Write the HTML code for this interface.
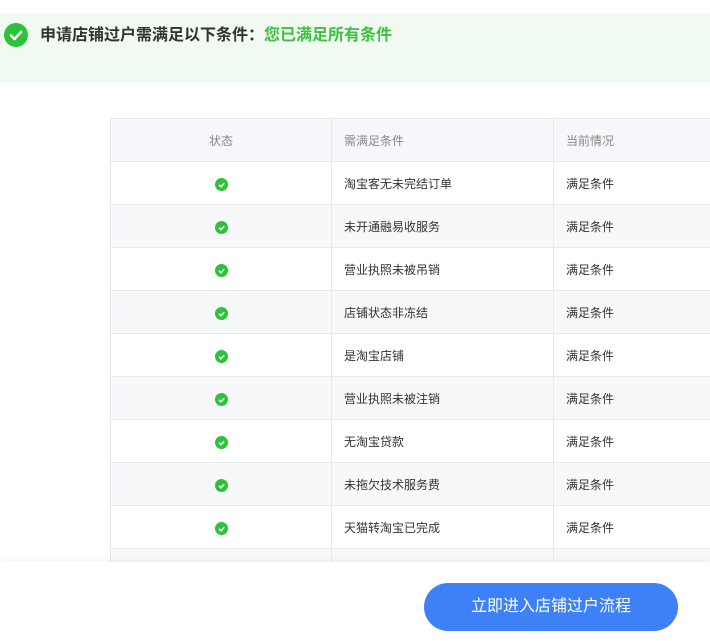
<!DOCTYPE html>
<html><head><meta charset="utf-8"><style>
*{margin:0;padding:0;box-sizing:border-box}
body{width:710px;height:641px;overflow:hidden;background:#fff;font-family:"Liberation Sans","Noto Sans CJK SC",sans-serif;position:relative}
.banner{position:absolute;left:0;top:13px;width:710px;height:70px;background:#f0faf0}
.banner .ic{position:absolute;left:4px;top:10px;width:24px;height:24px;border-radius:50%;background:#2ec13a}
.banner .t{position:absolute;left:40px;top:12px;font-size:16px;font-weight:bold;color:#333;line-height:22px}
.banner .t span{color:#3fc040}
table{position:absolute;left:110px;top:118px;border-collapse:collapse;width:620px;font-size:12px;color:#333}
td,th{height:43px;border:1px solid #e6eaef;font-weight:normal;text-align:left;padding-left:12px}
th{background:#f5f7fa;color:#888}
td:first-child,th:first-child{text-align:center;padding:0;width:221px}
td:nth-child(2),th:nth-child(2){width:222px}
tr:nth-child(odd) td{background:#f7f8fa}
.dot{display:inline-block;width:13px;height:13px;border-radius:50%;background:#2ec13a;vertical-align:middle;position:relative;top:1px}
.foot{position:absolute;left:0;top:562px;width:710px;height:79px;background:#fff;box-shadow:0 -3px 6px rgba(0,0,0,0.04)}
.btn{position:absolute;left:424px;top:21px;width:254px;height:48px;border-radius:24px;background:#3e80f6;color:#fff;font-size:16px;text-align:center;line-height:48px}
</style></head><body>
<div class="banner"><div class="ic"><svg width="24" height="24"><path d="M7 12.5l3.5 3.5 6.5-7" stroke="#fff" stroke-width="2.6" fill="none" stroke-linecap="round" stroke-linejoin="round"/></svg></div>
<div class="t">申请店铺过户需满足以下条件：<span>您已满足所有条件</span></div></div>
<table>
<tr><th>状态</th><th>需满足条件</th><th>当前情况</th></tr>
<tr><td><i class="dot"><svg width="13" height="13"><path d="M4 6.8l2 2 3.2-3.6" stroke="#fff" stroke-width="1.5" fill="none"/></svg></i></td><td>淘宝客无未完结订单</td><td>满足条件</td></tr>
<tr><td><i class="dot"><svg width="13" height="13"><path d="M4 6.8l2 2 3.2-3.6" stroke="#fff" stroke-width="1.5" fill="none"/></svg></i></td><td>未开通融易收服务</td><td>满足条件</td></tr>
<tr><td><i class="dot"><svg width="13" height="13"><path d="M4 6.8l2 2 3.2-3.6" stroke="#fff" stroke-width="1.5" fill="none"/></svg></i></td><td>营业执照未被吊销</td><td>满足条件</td></tr>
<tr><td><i class="dot"><svg width="13" height="13"><path d="M4 6.8l2 2 3.2-3.6" stroke="#fff" stroke-width="1.5" fill="none"/></svg></i></td><td>店铺状态非冻结</td><td>满足条件</td></tr>
<tr><td><i class="dot"><svg width="13" height="13"><path d="M4 6.8l2 2 3.2-3.6" stroke="#fff" stroke-width="1.5" fill="none"/></svg></i></td><td>是淘宝店铺</td><td>满足条件</td></tr>
<tr><td><i class="dot"><svg width="13" height="13"><path d="M4 6.8l2 2 3.2-3.6" stroke="#fff" stroke-width="1.5" fill="none"/></svg></i></td><td>营业执照未被注销</td><td>满足条件</td></tr>
<tr><td><i class="dot"><svg width="13" height="13"><path d="M4 6.8l2 2 3.2-3.6" stroke="#fff" stroke-width="1.5" fill="none"/></svg></i></td><td>无淘宝贷款</td><td>满足条件</td></tr>
<tr><td><i class="dot"><svg width="13" height="13"><path d="M4 6.8l2 2 3.2-3.6" stroke="#fff" stroke-width="1.5" fill="none"/></svg></i></td><td>未拖欠技术服务费</td><td>满足条件</td></tr>
<tr><td><i class="dot"><svg width="13" height="13"><path d="M4 6.8l2 2 3.2-3.6" stroke="#fff" stroke-width="1.5" fill="none"/></svg></i></td><td>天猫转淘宝已完成</td><td>满足条件</td></tr>
<tr><td></td><td></td><td></td></tr>
</table>
<div class="foot"><div class="btn">立即进入店铺过户流程</div></div>
</body></html>
